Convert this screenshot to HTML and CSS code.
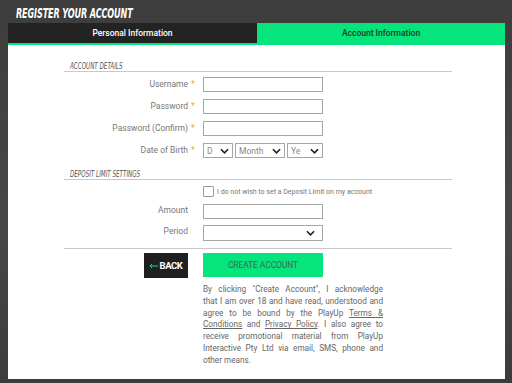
FILE: index.html
```html
<!DOCTYPE html>
<html lang="en">
  <head>
    <meta charset="UTF-8" />
    <meta name="viewport" content="width=device-width, initial-scale=1.0" />
    <title>Register Your Account</title>
    <link rel="stylesheet" href="styles.css">
  </head>
  <body>
    <div class="page">
      <h1 class="title"><span>REGISTER YOUR ACCOUNT</span></h1>

      <div class="tabs">
        <div class="tab">Personal Information</div>
        <div class="tab active">Account Information</div>
      </div>

      <div class="panel">
        <div class="form">
          <div class="section-head"><span>ACCOUNT DETAILS</span></div>

          <div class="rows">
            <label class="label">Username</label>
            <span class="star">*</span>
            <div class="input"></div>

            <label class="label">Password</label>
            <span class="star">*</span>
            <div class="input"></div>

            <label class="label">Password (Confirm)</label>
            <span class="star">*</span>
            <div class="input"></div>

            <label class="label">Date of Birth</label>
            <span class="star">*</span>
            <div class="dob">
              <div class="select day"><span>D</span>
                <svg viewBox="0 0 10 6"><path d="M1 1l4 4 4-4" /></svg>
              </div>
              <div class="select month"><span>Month</span>
                <svg viewBox="0 0 10 6"><path d="M1 1l4 4 4-4" /></svg>
              </div>
              <div class="select year"><span>Ye</span>
                <svg viewBox="0 0 10 6"><path d="M1 1l4 4 4-4" /></svg>
              </div>
            </div>
          </div>

          <div class="section-head deposit"><span>DEPOSIT LIMIT SETTINGS</span></div>

          <div class="rows limits">
            <span></span>
            <span></span>
            <div class="check-row">
              <div class="checkbox"></div>
              <span>I do not wish to set a Deposit Limit on my account</span>
            </div>

            <label class="label">Amount</label>
            <span class="star"></span>
            <div class="input"></div>

            <label class="label">Period</label>
            <span class="star"></span>
            <div class="select period"><span></span>
              <svg viewBox="0 0 10 6"><path d="M1 1l4 4 4-4" /></svg>
            </div>
          </div>

          <div class="actions">
            <div class="back-col">
              <button class="btn-back">
                <svg class="arrow" viewBox="0 0 9 6"><path d="M9 3H1M3 1L1 3l2 2" /></svg>
                <b>BACK</b>
              </button>
            </div>
            <div class="submit-col">
              <button class="btn-create">CREATE ACCOUNT</button>
              <p class="terms">
                <span>By clicking "Create Account", I acknowledge</span>
                <span>that I am over 18 and have read, understood and</span>
                <span>agree to be bound by the PlayUp <a href="#">Terms &amp;</a></span>
                <span><a href="#">Conditions</a> and <a href="#">Privacy Policy</a>. I also agree to</span>
                <span>receive promotional material from PlayUp</span>
                <span>Interactive Pty Ltd via email, SMS, phone and</span>
                <span class="last">other means.</span>
              </p>
            </div>
          </div>
        </div>
      </div>
    </div>
  </body>
</html>
```

FILE: styles.css
```css
* {
  margin: 0;
  padding: 0;
  box-sizing: border-box;
}

body {
  width: 512px;
  height: 383px;
  overflow: hidden;
  background: linear-gradient(180deg, #3d3d3d 0%, #474747 60%, #3c3c3c 100%);
  font-family: Roboto, "Noto Sans", sans-serif;
}

.page {
  padding: 0 7px 0 8px;
}

.title {
  height: 23px;
  padding: 6px 0 0 8px;
  color: #fff;
  font-family: "DejaVu Sans", sans-serif;
  font-size: 13.5px;
  font-style: italic;
  font-weight: bold;
  line-height: 14px;
  white-space: nowrap;
}
.title span {
  display: inline-block;
  transform: scaleX(0.6);
  transform-origin: left center;
  letter-spacing: -0.2px;
}

.tabs {
  display: grid;
  grid-template-columns: 249px 1fr;
  height: 22px;
}
.tab {
  display: flex;
  align-items: center;
  justify-content: center;
  background: #232323;
  color: #fff;
  font-size: 8.5px;
  font-weight: 500;
  border-bottom: 2px solid #05e57c;
}
.tab.active {
  background: #05e57c;
  color: #1b3a28;
}

.panel {
  background: #fff;
  height: 334px;
  padding-top: 17px;
}

.form {
  width: 388px;
  margin: 0 0 0 56px;
}

.section-head {
  border-bottom: 1px solid #c8c8c8;
  height: 10px;
  padding-left: 6px;
  font-family: "DejaVu Sans", sans-serif;
  font-size: 8px;
  font-style: italic;
  line-height: 9px;
  color: #555;
  white-space: nowrap;
}
.section-head span {
  display: inline-block;
  transform: scaleX(0.7);
  transform-origin: left center;
}
.section-head.deposit {
  margin-top: 12px;
}

.rows {
  display: grid;
  grid-template-columns: 124px 15px 120px;
  grid-auto-rows: 15px;
  row-gap: 7px;
  align-items: center;
  margin-top: 5px;
}
.rows.limits {
  grid-template-rows: 11px 15px 15px;
  row-gap: 6px;
  margin-top: 6px;
}
.rows.limits .input {
  margin-top: 1px;
}

.label {
  text-align: right;
  font-size: 8.5px;
  line-height: 15px;
  color: #777;
}
.star {
  padding-left: 3px;
  font-size: 9px;
  line-height: 15px;
  color: #f2a062;
}

.input {
  height: 15px;
  border: 1px solid #a6a6a6;
  background: #fff;
}

.dob {
  display: flex;
  gap: 2px;
}
.select {
  display: flex;
  align-items: center;
  justify-content: space-between;
  height: 15px;
  padding: 0 3px 0 3px;
  border: 1px solid #a6a6a6;
  font-size: 8.5px;
  color: #888;
  overflow: hidden;
}
.select svg {
  width: 9px;
  height: 6px;
  flex-shrink: 0;
  fill: none;
  stroke: #222;
  stroke-width: 1.8;
}
.select.day {
  width: 30px;
}
.select.month {
  width: 50px;
}
.select.year {
  width: 36px;
}
.select.period {
  height: 16px;
  margin-top: 2px;
  padding-right: 7px;
}

.check-row {
  display: flex;
  align-items: center;
  gap: 3px;
  font-size: 7px;
  color: #777;
  white-space: nowrap;
}
.checkbox {
  flex-shrink: 0;
  width: 11px;
  height: 11px;
  border: 1px solid #9a9a9a;
  border-radius: 1px;
}

.actions {
  display: grid;
  grid-template-columns: 124px 15px 180px;
  border-top: 1px solid #c8c8c8;
  margin-top: 9px;
  padding-top: 4px;
}
.back-col {
  display: flex;
  justify-content: flex-end;
  align-items: flex-start;
  grid-column: 1 / 3;
  padding-right: 15px;
}
.btn-back {
  width: 44px;
  height: 25px;
  border: none;
  background: #1f1f1f;
  font-family: inherit;
  display: flex;
  align-items: center;
  justify-content: center;
  gap: 1px;
}
.btn-back .arrow {
  width: 9px;
  height: 6px;
  fill: none;
  stroke: #05e57c;
  stroke-width: 1;
}
.btn-back b {
  color: #fff;
  font-size: 9.5px;
  letter-spacing: -0.4px;
}

.btn-create {
  display: block;
  width: 120px;
  height: 24px;
  border: none;
  background: #05e57c;
  color: #3a6b50;
  font-family: inherit;
  font-size: 8.5px;
  letter-spacing: -0.1px;
}

.terms {
  margin-top: 7px;
  font-size: 8.2px;
  line-height: 11.8px;
  color: #666;
}
.terms span {
  display: block;
  text-align: justify;
  text-align-last: justify;
  white-space: nowrap;
}
.terms span.last {
  text-align-last: left;
}
.terms a {
  color: #666;
  text-decoration: underline;
}
```
